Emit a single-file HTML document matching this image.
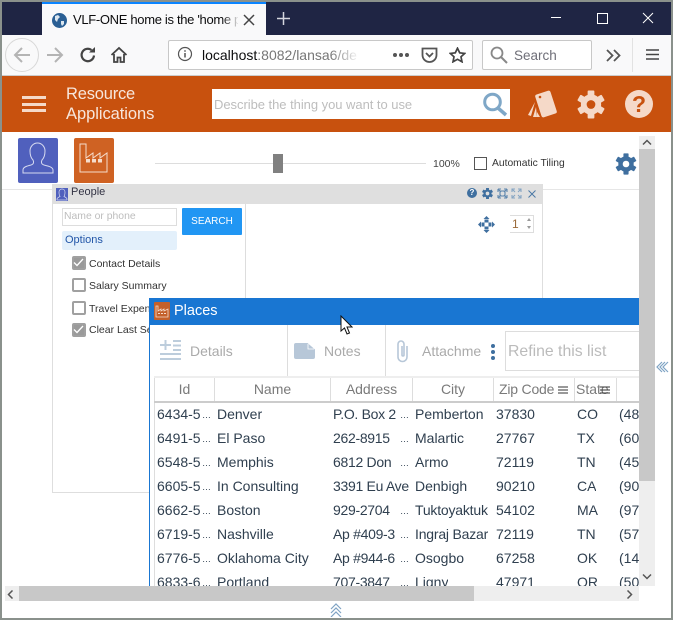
<!DOCTYPE html>
<html><head><meta charset="utf-8">
<style>
html,body{margin:0;padding:0;width:673px;height:620px;overflow:hidden;background:#fff}
body{font-family:"Liberation Sans",sans-serif;position:relative}
div,span,svg{position:absolute;white-space:nowrap}
.t{color:#2f3f4f;font-size:14px;line-height:18px;height:18px;overflow:hidden}
.e{color:#2f3f4f;font-size:9px;line-height:18px;height:18px;padding-top:1px}
.h{color:#7a7a7a;font-size:14px;line-height:18px;top:380px;text-align:center}
.vl{width:1px;background:#ddd}
.ck{width:10px;height:10px;border:2px solid #a0a0a0;border-radius:2px;background:#fff;left:72px}
.ck.on{background:#9a9a9a}
.lb{font-size:10.5px;color:#333;left:89px;line-height:14px}
</style></head><body>

<!-- title bar -->
<div style="left:2px;top:2px;width:669px;height:33px;background:#1f2544"></div>
<div style="left:42px;top:2px;width:224px;height:33px;background:#f9f9fa"></div>
<div style="left:42px;top:2px;width:224px;height:2px;background:#0a84ff"></div>
<svg style="left:51px;top:12px" width="17" height="17" viewBox="0 0 17 17"><circle cx="8.5" cy="8.5" r="7.5" fill="#2a5f94"/><path d="M4 4l3-1 2 2-2 2-1 3-2-2zM10 9l3 0 0 3-2 2-1-2z" fill="#dbe6ef"/></svg>
<div style="left:73px;top:11px;width:165px;height:18px;overflow:hidden;font-size:13px;line-height:18px;color:#0c0c0d;letter-spacing:-.32px">VLF-ONE home is the 'home pa</div>
<div style="left:222px;top:4px;width:18px;height:31px;background:linear-gradient(90deg,rgba(249,249,250,0),#f9f9fa)"></div>
<svg style="left:243px;top:14px" width="12" height="12" viewBox="0 0 12 12"><path d="M1 1l10 10M11 1L1 11" stroke="#444" stroke-width="1.5"/></svg>
<svg style="left:276px;top:11px" width="15" height="15" viewBox="0 0 15 15"><path d="M7.5 1v13M1 7.5h13" stroke="#d5d6de" stroke-width="1.5"/></svg>
<div style="left:551px;top:17px;width:10px;height:1px;background:#fff"></div>
<div style="left:597px;top:13px;width:9px;height:9px;border:1px solid #fff"></div>
<svg style="left:642px;top:12px" width="12" height="12" viewBox="0 0 12 12"><path d="M1 1l10 10M11 1L1 11" stroke="#fff" stroke-width="1"/></svg>

<!-- toolbar -->
<div style="left:2px;top:35px;width:669px;height:41px;background:#f9f9fa"></div>
<div style="left:5px;top:38px;width:32px;height:32px;border:1px solid #d8d8d8;border-radius:50%"></div>
<svg style="left:13px;top:46px" width="18" height="18" viewBox="0 0 18 18"><path d="M17 9H2M9 2L2 9l7 7" fill="none" stroke="#b4b4b4" stroke-width="2"/></svg>
<svg style="left:46px;top:46px" width="18" height="18" viewBox="0 0 18 18"><path d="M1 9h15M9 2l7 7-7 7" fill="none" stroke="#b4b4b4" stroke-width="2"/></svg>
<svg style="left:79px;top:46px" width="18" height="18" viewBox="0 0 18 18"><path d="M15 9.5A6.2 6.2 0 1 1 12.500 4" fill="none" stroke="#444" stroke-width="2.200"/><path d="M10 6.500h6V1z" fill="#444"/></svg>
<svg style="left:110px;top:46px" width="18" height="18" viewBox="0 0 18 18"><path d="M1.500 9L9 2l7.500 7M4 8v8h3.500v-4.500h3V16H14V8" fill="none" stroke="#444" stroke-width="1.800"/></svg>
<div style="left:168px;top:40px;width:303px;height:28px;border:1px solid #c8c8c8;border-radius:2px;background:#fff"></div>
<svg style="left:177px;top:46px" width="16" height="16" viewBox="0 0 16 16"><circle cx="8" cy="8" r="6.500" fill="none" stroke="#555" stroke-width="1.200"/><path d="M8 7v4.500M8 4.200v1.600" stroke="#555" stroke-width="1.500"/></svg>
<div style="left:202px;top:46px;width:155px;height:18px;overflow:hidden;font-size:14px;line-height:18px;color:#0c0c0d">localhost<span style="position:static;color:#777">:8082/lansa6/de</span></div>
<div style="left:330px;top:42px;width:30px;height:24px;background:linear-gradient(90deg,rgba(255,255,255,0),#fff)"></div>
<svg style="left:392px;top:52px" width="18" height="6" viewBox="0 0 18 6"><circle cx="3" cy="3" r="2" fill="#555"/><circle cx="9" cy="3" r="2" fill="#555"/><circle cx="15" cy="3" r="2" fill="#555"/></svg>
<svg style="left:421px;top:47px" width="17" height="16" viewBox="0 0 17 16"><path d="M1.500 1.500h14V8a6.500 6.500 0 0 1-14 0z" fill="none" stroke="#555" stroke-width="1.800"/><path d="M5 6l3.500 3.500L12 6" fill="none" stroke="#555" stroke-width="1.800"/></svg>
<svg style="left:449px;top:47px" width="17" height="16" viewBox="0 0 17 16"><path d="M8.500 1.200l2.200 4.600 5 .6-3.700 3.400 1 5-4.500-2.500-4.500 2.500 1-5L1.300 6.400l5-.6z" fill="none" stroke="#444" stroke-width="1.700"/></svg>
<div style="left:482px;top:40px;width:108px;height:28px;border:1px solid #c8c8c8;border-radius:2px;background:#fff"></div>
<svg style="left:490px;top:46px" width="18" height="18" viewBox="0 0 18 18"><circle cx="7" cy="7" r="5.500" fill="none" stroke="#888" stroke-width="1.800"/><path d="M11 11l6 6" stroke="#888" stroke-width="2"/></svg>
<div style="left:514px;top:47px;font-size:13.500px;line-height:18px;color:#6f6f78">Search</div>
<svg style="left:606px;top:49px" width="15" height="13" viewBox="0 0 15 13"><path d="M1 1l5.500 5.500L1 12M8 1l5.500 5.500L8 12" fill="none" stroke="#555" stroke-width="1.800"/></svg>
<div style="left:632px;top:38px;width:1px;height:34px;background:#e2e2e2"></div>
<svg style="left:646px;top:48px" width="13" height="13" viewBox="0 0 13 13"><path d="M0 2h13M0 6.500h13M0 11h13" stroke="#444" stroke-width="1.600"/></svg>
<div style="left:2px;top:75px;width:669px;height:1px;background:#ccc"></div>

<!-- orange header -->
<div style="left:2px;top:76px;width:669px;height:56px;background:#c8510e"></div>
<div style="left:22px;top:96px;width:24px;height:3px;background:#f5d9c8"></div>
<div style="left:22px;top:103px;width:24px;height:3px;background:#f5d9c8"></div>
<div style="left:22px;top:109px;width:24px;height:3px;background:#f5d9c8"></div>
<div style="left:66px;top:85px;font-size:16.500px;line-height:19px;color:#f7e6dc;letter-spacing:-.2px">Resource</div>
<div style="left:66px;top:105px;font-size:16.500px;line-height:19px;color:#f7e6dc;letter-spacing:-.05px">Applications</div>
<div style="left:212px;top:89px;width:298px;height:30px;background:#fff"></div>
<div style="left:214px;top:96px;font-size:13px;line-height:17px;color:#bdbdbd;letter-spacing:-.04px">Describe the thing you want to use</div>
<svg style="left:482px;top:92px" width="26" height="25" viewBox="0 0 26 25"><circle cx="10.500" cy="10" r="7.800" fill="none" stroke="#7fa7c7" stroke-width="3"/><path d="M16 16l8 7" stroke="#7fa7c7" stroke-width="3.500"/></svg>
<svg style="left:527px;top:89px" width="32" height="30" viewBox="0 0 32 30"><rect x="11" y="3" width="16" height="24" rx="2" fill="#f5d9c8" transform="rotate(-18 19 15)"/><path d="M8 13L1 26l3 1zM9 18l-3 10 4 0zM10 23l0 5 3 0z" fill="#f5d9c8"/><circle cx="13" cy="8" r="1.300" fill="#c8510e"/></svg>
<svg style="left:576px;top:90px" width="30" height="29" viewBox="-15 -15 30 30"><g fill="#f5d9c8"><circle r="10.500"/><g><rect x="-3.500" y="-14.500" width="7" height="6" rx="1"/><rect x="-3.500" y="8.500" width="7" height="6" rx="1"/></g><rect x="-3.500" y="-14.500" width="7" height="6" rx="1" transform="rotate(60)"/><rect x="-3.500" y="8.500" width="7" height="6" rx="1" transform="rotate(60)"/><rect x="-3.500" y="-14.500" width="7" height="6" rx="1" transform="rotate(120)"/><rect x="-3.500" y="8.500" width="7" height="6" rx="1" transform="rotate(120)"/></g><circle r="4.500" fill="#c8510e"/></svg>
<div style="left:625px;top:90px;width:28px;height:28px;border-radius:50%;background:#f5d9c8;text-align:center;font-size:23px;font-weight:bold;line-height:28px;color:#c8510e">?</div>

<!-- content top -->
<div style="left:18px;top:138px;width:40px;height:45px;background:#5060bd;border-radius:2px"></div>
<svg style="left:22px;top:142px" width="32" height="36" viewBox="0 0 32 36"><path d="M1 31v-3c0-3 4-4 8-5 3-1 3-3 2-5-2-2-3-5-3-9 0-4 3-8 7.500-8S23 5 23 9c0 4-1 7-3 9-1 2-1 4 2 5 4 1 9 2 9 5v3z" fill="none" stroke="#d6daf0" stroke-width="1"/></svg>
<div style="left:74px;top:138px;width:40px;height:45px;background:#cf6223;border-radius:2px"></div>
<svg style="left:79px;top:143px" width="30" height="33" viewBox="0 0 30 33"><path d="M1 29V1h6v14l7-5v5l7-5v5l7-5v19z" fill="none" stroke="#f5dccb" stroke-width="1"/><rect x="7" y="16" width="4" height="3.500" fill="#f5dccb"/><rect x="13" y="16" width="4" height="3.500" fill="#f5dccb"/><rect x="19" y="16" width="4" height="3.500" fill="#f5dccb"/></svg>
<div style="left:155px;top:163px;width:271px;height:1px;background:#ddd"></div>
<div style="left:273px;top:154px;width:10px;height:19px;background:#808080"></div>
<div style="left:433px;top:157px;font-size:10.500px;line-height:14px;color:#444">100%</div>
<div style="left:474px;top:157px;width:11px;height:11px;border:1px solid #555;background:#fff"></div>
<div style="left:492px;top:157px;font-size:10.300px;line-height:14px;color:#333">Automatic Tiling</div>
<svg style="left:615px;top:153px" width="22" height="22" viewBox="-15 -15 30 30"><g fill="#3f6f9f"><circle r="10.500"/><rect x="-3.500" y="-14.500" width="7" height="6" rx="1"/><rect x="-3.500" y="8.500" width="7" height="6" rx="1"/><rect x="-3.500" y="-14.500" width="7" height="6" rx="1" transform="rotate(60)"/><rect x="-3.500" y="8.500" width="7" height="6" rx="1" transform="rotate(60)"/><rect x="-3.500" y="-14.500" width="7" height="6" rx="1" transform="rotate(120)"/><rect x="-3.500" y="8.500" width="7" height="6" rx="1" transform="rotate(120)"/></g><circle r="4.500" fill="#fff"/></svg>
<div style="left:2px;top:189px;width:637px;height:1px;background:#e6e6e6"></div>

<!-- People window -->
<div style="left:52px;top:184px;width:489px;height:308px;background:#fff;border:1px solid #dedede;border-top:0"></div>
<div style="left:52px;top:184px;width:490px;height:20px;background:#dfdfdf"></div>
<div style="left:56px;top:188px;width:12px;height:13px;background:#5060bd"></div>
<svg style="left:56px;top:188px" width="12" height="13" viewBox="0 0 12 13"><path d="M1 12v-1c0-1 2-2 3-2.500C3 7 3 5.500 3 4c0-2 1.500-3 3-3s3 1 3 3c0 1.500 0 3-1 4.500 1 .5 3 1.500 3 2.500v1z" fill="none" stroke="#d6daf0" stroke-width=".7"/></svg>
<div style="left:71px;top:185px;font-size:11px;line-height:15px;color:#334">People</div>
<div style="left:467px;top:188px;width:10px;height:10px;border-radius:50%;background:#3f6f9f;color:#fff;font-size:8px;font-weight:bold;line-height:10px;text-align:center">?</div>
<svg style="left:482px;top:188px" width="11" height="11" viewBox="-15 -15 30 30"><g fill="#3f6f9f"><circle r="11"/><rect x="-4" y="-15" width="8" height="30"/><rect x="-4" y="-15" width="8" height="30" transform="rotate(60)"/><rect x="-4" y="-15" width="8" height="30" transform="rotate(120)"/></g><circle r="5" fill="#dfdfdf"/></svg>
<svg style="left:497px;top:188px" width="11" height="11" viewBox="0 0 11 11"><path d="M1 1h3M1 1v3M10 1H7M10 1v3M1 10h3M1 10V7M10 10H7M10 10V7M1 1l3 3M10 1L7 4M1 10l3-3M10 10L7 7M3 3h5v5H3z" fill="none" stroke="#5d86ad" stroke-width="1.100"/></svg>
<svg style="left:511px;top:188px" width="11" height="11" viewBox="0 0 11 11"><path d="M4 1H1v3M7 1h3v3M4 10H1V7M7 10h3V7M1 1l3 3M10 1L7 4M1 10l3-3M10 10L7 7" fill="none" stroke="#86a5c3" stroke-width="1.100"/></svg>
<svg style="left:528px;top:190px" width="8" height="8" viewBox="0 0 8 8"><path d="M.5.500l7 7M7.500.500l-7 7" stroke="#4d7aa5" stroke-width="1"/></svg>
<div class="vl" style="left:245px;top:204px;height:94px"></div>
<div style="left:62px;top:208px;width:113px;height:16px;border:1px solid #ddd;background:#fff"></div>
<div style="left:64px;top:209px;font-size:10.400px;line-height:15px;color:#bdbdbd">Name or phone</div>
<div style="left:182px;top:208px;width:60px;height:27px;background:#2196f3;border-radius:1px;color:#fff;font-size:10px;line-height:27px;text-align:center">SEARCH</div>
<div style="left:62px;top:231px;width:115px;height:19px;background:#e3f0fb;border-radius:2px"></div>
<div style="left:65px;top:233px;font-size:11px;line-height:15px;color:#2256a8">Options</div>
<div class="ck on" style="top:256px"></div>
<svg style="left:73px;top:257px" width="11" height="11" viewBox="0 0 11 11"><path d="M1 5.500l3 3 6-6.500" fill="none" stroke="#fff" stroke-width="1.300"/></svg>
<div class="lb" style="top:257px">Contact Details</div>
<div class="ck" style="top:278px"></div>
<div class="lb" style="top:279px">Salary Summary</div>
<div class="ck" style="top:301px"></div>
<div class="lb" style="top:302px;width:62px;overflow:hidden">Travel Expenses</div>
<div class="ck on" style="top:323px"></div>
<svg style="left:73px;top:324px" width="11" height="11" viewBox="0 0 11 11"><path d="M1 5.500l3 3 6-6.500" fill="none" stroke="#fff" stroke-width="1.300"/></svg>
<div class="lb" style="top:323px;width:62px;overflow:hidden">Clear Last Search</div>
<svg style="left:478px;top:216px" width="17" height="17" viewBox="0 0 17 17"><g fill="#3f6f9f"><path d="M8.500 0l3 3h-6zM8.500 17l3-3h-6zM0 8.500l3-3v6zM17 8.500l-3-3v6z"/><rect x="6.500" y="3.500" width="4" height="3"/><rect x="6.500" y="10.500" width="4" height="3"/><rect x="3.500" y="6.500" width="3" height="4"/><rect x="10.500" y="6.500" width="3" height="4"/></g></svg>
<div style="left:510px;top:215px;width:23px;height:16px;border:1px solid #ddd;border-left:0;background:#fff"></div>
<div style="left:512px;top:216px;font-size:12px;line-height:16px;color:#9a6a3a">1</div>
<svg style="left:526px;top:218px" width="6" height="11" viewBox="0 0 6 11"><path d="M3 0l2 3H1zM3 11L1 8h4z" fill="#999"/></svg>

<!-- Places window -->
<div style="left:149px;top:298px;width:490px;height:288px;background:#fff"></div>
<div style="left:149px;top:298px;width:1px;height:288px;background:#1976d2"></div>
<div style="left:150px;top:298px;width:489px;height:27px;background:#1976d2"></div>
<div style="left:154px;top:302px;width:16px;height:18px;background:#c4602a;border-radius:1px"></div>
<svg style="left:155px;top:304px" width="14" height="14" viewBox="0 0 14 14"><path d="M1 13V2h2v5l3-2v2l3-2v2l4-2v8z" fill="none" stroke="#f5dccb" stroke-width=".8"/><path d="M3 9h2v1H3zM6 9h2v1H6zM9 9h2v1H9z" fill="#f5dccb"/></svg>
<div style="left:174px;top:302px;font-size:14.500px;line-height:19px;color:#fff">Places</div>

<!-- toolbar of Places -->
<div class="vl" style="left:287px;top:325px;height:51px"></div>
<div class="vl" style="left:385px;top:325px;height:51px"></div>
<svg style="left:159px;top:339px" width="23" height="22" viewBox="0 0 23 22"><path d="M6.500 1v10M1 6h11M14 2h8M14 6.500h8M14 11h8M1 15h21M1 20h21" stroke="#bdcddc" stroke-width="2" fill="none"/></svg>
<div style="left:190px;top:342px;font-size:14px;line-height:18px;color:#aaa">Details</div>
<svg style="left:294px;top:343px" width="21" height="16" viewBox="0 0 21 16"><path d="M2 0h11.500L21 6.500V14a2 2 0 0 1-2 2H2a2 2 0 0 1-2-2V2a2 2 0 0 1 2-2z" fill="#b7c7d8"/><path d="M14 1v5h6" fill="none" stroke="#fff" stroke-width=".8"/></svg>
<div style="left:324px;top:342px;font-size:14px;line-height:18px;color:#aaa">Notes</div>
<svg style="left:396px;top:339px" width="14" height="24" viewBox="0 0 14 24"><path d="M11 7v11a4.500 4.500 0 0 1-9 0V5a3 3 0 0 1 6 0v11a1 1 0 0 1-2 0V7" fill="none" stroke="#b7c7d8" stroke-width="1.600"/></svg>
<div style="left:422px;top:342px;width:60px;overflow:hidden;font-size:14px;line-height:18px;color:#aaa">Attachments</div>
<div style="left:491px;top:344px;width:4px;height:4px;border-radius:50%;background:#3f6f9f"></div>
<div style="left:491px;top:350px;width:4px;height:4px;border-radius:50%;background:#3f6f9f"></div>
<div style="left:491px;top:356px;width:4px;height:4px;border-radius:50%;background:#3f6f9f"></div>
<div style="left:505px;top:331px;width:134px;height:38px;border:1px solid #ddd;border-right:0;background:#fff"></div>
<div style="left:508px;top:342px;font-size:15.800px;line-height:19px;color:#bbb">Refine this list</div>

<!-- table -->
<div style="left:154px;top:376px;width:485px;height:2px;background:#eee"></div>
<div class="vl" style="left:154px;top:378px;height:208px"></div>
<div class="vl" style="left:214px;top:378px;height:23px"></div>
<div class="vl" style="left:330px;top:378px;height:23px"></div>
<div class="vl" style="left:412px;top:378px;height:23px"></div>
<div class="vl" style="left:493px;top:378px;height:23px"></div>
<div class="vl" style="left:574px;top:378px;height:23px"></div>
<div class="vl" style="left:616px;top:378px;height:23px"></div>
<div style="left:154px;top:401px;width:485px;height:2px;background:#ccc"></div>
<div class="h" style="left:155px;width:59px">Id</div>
<div class="h" style="left:215px;width:115px">Name</div>
<div class="h" style="left:331px;width:81px">Address</div>
<div class="h" style="left:413px;width:80px">City</div>
<div class="h" style="left:499px;letter-spacing:-.2px">Zip Code</div>
<div class="h" style="left:576px;">State</div>
<svg style="left:558px;top:386px" width="10" height="8" viewBox="0 0 10 8"><path d="M0 1h10M0 4h10M0 7h10" stroke="#333"/></svg>
<svg style="left:600px;top:386px" width="10" height="8" viewBox="0 0 10 8"><path d="M0 1h10M0 4h10M0 7h10" stroke="#333"/></svg>
<div style="left:155px;top:403px;width:484px;height:183px;overflow:hidden">
<div class="t" style="left:2px;top:2px">6434-5</div><div class="e" style="left:47px;top:2px">…</div><div class="t" style="left:62px;top:2px">Denver</div><div class="t" style="left:178px;top:2px;letter-spacing:-.3px">P.O. Box 2</div><div class="e" style="left:245px;top:2px">…</div><div class="t" style="left:260px;top:2px">Pemberton</div><div class="t" style="left:341px;top:2px">37830</div><div class="t" style="left:422px;top:2px">CO</div><div class="t" style="left:464px;top:2px">(48</div>
<div class="t" style="left:2px;top:26px">6491-5</div><div class="e" style="left:47px;top:26px">…</div><div class="t" style="left:62px;top:26px">El Paso</div><div class="t" style="left:178px;top:26px;letter-spacing:-.3px">262-8915</div><div class="e" style="left:245px;top:26px">…</div><div class="t" style="left:260px;top:26px">Malartic</div><div class="t" style="left:341px;top:26px">27767</div><div class="t" style="left:422px;top:26px">TX</div><div class="t" style="left:464px;top:26px">(60</div>
<div class="t" style="left:2px;top:50px">6548-5</div><div class="e" style="left:47px;top:50px">…</div><div class="t" style="left:62px;top:50px">Memphis</div><div class="t" style="left:178px;top:50px;letter-spacing:-.3px">6812 Don</div><div class="e" style="left:245px;top:50px">…</div><div class="t" style="left:260px;top:50px">Armo</div><div class="t" style="left:341px;top:50px">72119</div><div class="t" style="left:422px;top:50px">TN</div><div class="t" style="left:464px;top:50px">(45</div>
<div class="t" style="left:2px;top:74px">6605-5</div><div class="e" style="left:47px;top:74px">…</div><div class="t" style="left:62px;top:74px">In Consulting</div><div class="t" style="left:178px;top:74px;letter-spacing:-.3px">3391 Eu Ave</div><div class="t" style="left:260px;top:74px">Denbigh</div><div class="t" style="left:341px;top:74px">90210</div><div class="t" style="left:422px;top:74px">CA</div><div class="t" style="left:464px;top:74px">(90</div>
<div class="t" style="left:2px;top:98px">6662-5</div><div class="e" style="left:47px;top:98px">…</div><div class="t" style="left:62px;top:98px">Boston</div><div class="t" style="left:178px;top:98px;letter-spacing:-.3px">929-2704</div><div class="e" style="left:245px;top:98px">…</div><div class="t" style="left:260px;top:98px;letter-spacing:-.2px">Tuktoyaktuk</div><div class="t" style="left:341px;top:98px">54102</div><div class="t" style="left:422px;top:98px">MA</div><div class="t" style="left:464px;top:98px">(97</div>
<div class="t" style="left:2px;top:122px">6719-5</div><div class="e" style="left:47px;top:122px">…</div><div class="t" style="left:62px;top:122px">Nashville</div><div class="t" style="left:178px;top:122px;letter-spacing:-.3px">Ap #409-3</div><div class="e" style="left:245px;top:122px">…</div><div class="t" style="left:260px;top:122px;letter-spacing:-.2px">Ingraj Bazar</div><div class="t" style="left:341px;top:122px">72119</div><div class="t" style="left:422px;top:122px">TN</div><div class="t" style="left:464px;top:122px">(57</div>
<div class="t" style="left:2px;top:146px">6776-5</div><div class="e" style="left:47px;top:146px">…</div><div class="t" style="left:62px;top:146px">Oklahoma City</div><div class="t" style="left:178px;top:146px;letter-spacing:-.3px">Ap #944-6</div><div class="e" style="left:245px;top:146px">…</div><div class="t" style="left:260px;top:146px">Osogbo</div><div class="t" style="left:341px;top:146px">67258</div><div class="t" style="left:422px;top:146px">OK</div><div class="t" style="left:464px;top:146px">(14</div>
<div class="t" style="left:2px;top:170px">6833-6</div><div class="e" style="left:47px;top:170px">…</div><div class="t" style="left:62px;top:170px">Portland</div><div class="t" style="left:178px;top:170px;letter-spacing:-.3px">707-3847</div><div class="e" style="left:245px;top:170px">…</div><div class="t" style="left:260px;top:170px">Ligny</div><div class="t" style="left:341px;top:170px">47971</div><div class="t" style="left:422px;top:170px">OR</div><div class="t" style="left:464px;top:170px">(50</div>
</div>

<!-- cursor -->
<svg style="left:340px;top:315px" width="13" height="20" viewBox="0 0 13 20"><path d="M1 1v15l3.500-3 2.500 6 2.500-1-2.500-6h5z" fill="#fff" stroke="#111" stroke-width="1"/></svg>

<!-- scrollbars -->
<div style="left:639px;top:136px;width:16px;height:450px;background:#eee"></div>
<div style="left:639px;top:149px;width:16px;height:332px;background:#c8c8c8"></div>
<svg style="left:642px;top:139px" width="10" height="7" viewBox="0 0 10 7"><path d="M1 5.500l4-4 4 4" fill="none" stroke="#555" stroke-width="1.500"/></svg>
<svg style="left:642px;top:573px" width="10" height="7" viewBox="0 0 10 7"><path d="M1 1.500l4 4 4-4" fill="none" stroke="#555" stroke-width="1.500"/></svg>
<div style="left:5px;top:586px;width:634px;height:15px;background:#eee"></div>
<div style="left:19px;top:586px;width:455px;height:15px;background:#c8c8c8"></div>
<svg style="left:7px;top:590px" width="7" height="9" viewBox="0 0 7 9"><path d="M5.500.5l-4 4 4 4" fill="none" stroke="#555" stroke-width="1.500"/></svg>
<svg style="left:626px;top:590px" width="7" height="9" viewBox="0 0 7 9"><path d="M1.500.5l4 4-4 4" fill="none" stroke="#555" stroke-width="1.500"/></svg>
<svg style="left:656px;top:361px" width="13" height="12" viewBox="0 0 13 12"><path d="M6 1L1 6l5 5M9 1L4 6l5 5M12 1L7 6l5 5" fill="none" stroke="#7fa3c4" stroke-width="1.200"/></svg>
<svg style="left:330px;top:603px" width="12" height="14" viewBox="0 0 12 14"><path d="M1 6l5-5 5 5M1 10l5-5 5 5M1 14l5-5 5 5" fill="none" stroke="#7fa3c4" stroke-width="1.200"/></svg>

<!-- outer frame -->
<div style="left:0;top:0;width:669px;height:616px;border:2px solid #8a918c;pointer-events:none"></div>
</body></html>
